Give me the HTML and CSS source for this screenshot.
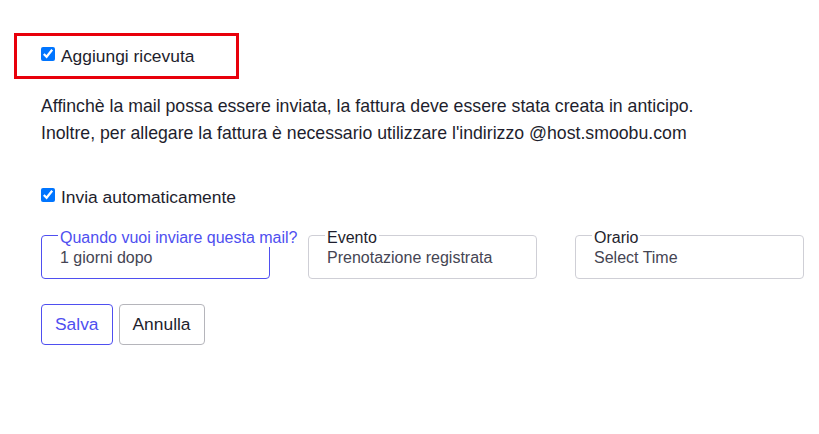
FILE: index.html
```html
<!DOCTYPE html>
<html lang="it">
<head>
<meta charset="utf-8">
<link rel="stylesheet" href="styles.css">
</head>
<body>
<div class="page">
  <div class="highlight">
    <label class="check"><input type="checkbox" checked> <span>Aggiungi ricevuta</span></label>
  </div>
  <div class="content">
    <p class="note">Affinchè la mail possa essere inviata, la fattura deve essere stata creata in anticipo.<br>Inoltre, per allegare la fattura è necessario utilizzare l'indirizzo @host.smoobu.com</p>
    <label class="check auto"><input type="checkbox" checked> <span>Invia automaticamente</span></label>
    <div class="fields">
      <div class="field active">
        <span class="flabel">Quando vuoi inviare questa mail?</span>
        <span class="fvalue">1 giorni dopo</span>
      </div>
      <div class="field">
        <span class="flabel">Evento</span>
        <span class="fvalue">Prenotazione registrata</span>
      </div>
      <div class="field">
        <span class="flabel">Orario</span>
        <span class="fvalue">Select Time</span>
      </div>
    </div>
    <div class="actions">
      <button class="btn primary">Salva</button>
      <button class="btn">Annulla</button>
    </div>
  </div>
</div>
</body>
</html>
```
FILE: styles.css
```css
html, body {
  margin: 0;
  padding: 0;
  background: #fff;
}
body {
  font-family: "Liberation Sans", Arial, sans-serif;
  color: #1e1e2d;
  font-size: 17.7px;
}
.page {
  padding: 33px 14px 0 14px;
}
.highlight {
  height: 40px;
  border: 3px solid #e8000b;
  padding: 0 0 0 24px;
  width: 195px;
  display: flex;
  align-items: flex-start;
}
.check {
  display: flex;
  align-items: flex-start;
  gap: 6px;
  font-size: 17.4px;
  line-height: 20px;
}
.check input {
  width: 14px;
  height: 14px;
  margin: 1px 0 0 0;
}
.highlight .check {
  margin-top: 10px;
}
.content {
  padding-left: 27px;
}
.note {
  margin: 14px 0 0 0;
  font-size: 17.7px;
  line-height: 27px;
}
.auto {
  margin-top: 40px;
}
.fields {
  display: flex;
  gap: 38px;
  margin-top: 28px;
}
.field {
  position: relative;
  width: 229px;
  height: 44px;
  box-sizing: border-box;
  border: 1px solid #cfcfd6;
  border-radius: 4px;
  padding: 13px 0 0 18px;
}
.field.active {
  border-color: #4f4ff0;
}
.flabel {
  position: absolute;
  top: -7px;
  left: 16px;
  background: #fff;
  padding: 0 2px;
  font-size: 16px;
  line-height: 18px;
  white-space: nowrap;
  color: #1e1e2d;
}
.field.active .flabel {
  color: #4f4ff0;
}
.fvalue {
  font-size: 16px;
  line-height: 18px;
  color: #454553;
  display: block;
}
.actions {
  display: flex;
  gap: 6px;
  margin-top: 25px;
}
.btn {
  font-family: inherit;
  font-size: 17.4px;
  height: 41px;
  padding: 0 13px;
  background: #fff;
  border: 1px solid #b5b5bb;
  border-radius: 4px;
  color: #1e1e2d;
}
.btn.primary {
  border-color: #4f4ff0;
  color: #4f4ff0;
}
```
